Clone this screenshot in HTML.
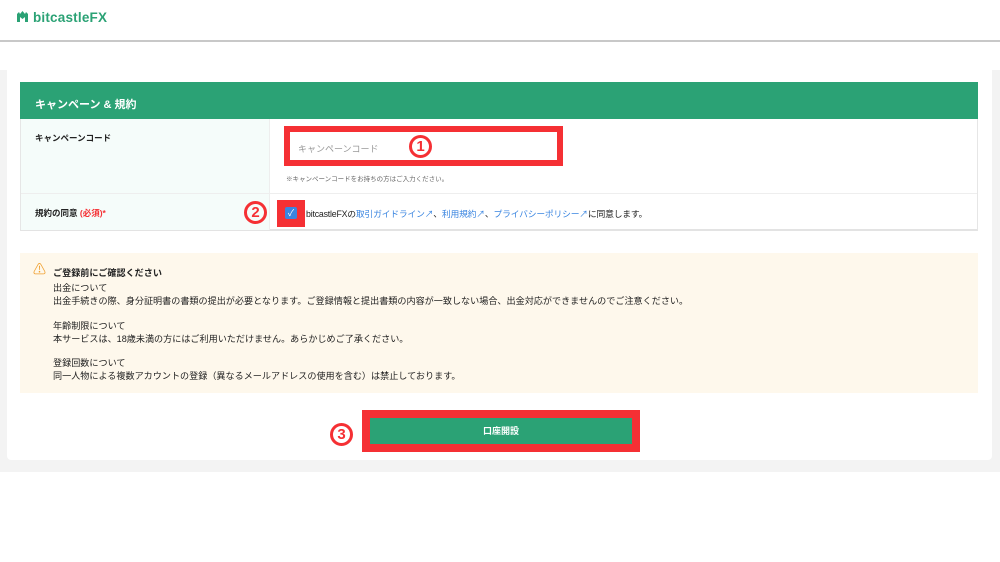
<!DOCTYPE html>
<html><head><meta charset="utf-8"><style>
*{box-sizing:border-box;margin:0;padding:0}
body{width:1000px;height:562px;background:#fff;font-family:"Liberation Sans","Noto Sans CJK JP",sans-serif;position:relative;overflow:hidden;color:#222}
.abs{position:absolute}
.hdr{left:0;top:0;width:1000px;height:42px;background:#fff;border-bottom:2px solid #c8c8c8}
.logo{left:16px;top:10px;font-size:13.5px;font-weight:bold;color:#2ba275;letter-spacing:0.2px}
.gray{left:0;top:70px;width:1000px;height:402px;background:#f3f3f3}
.card{left:7px;top:66px;width:985px;height:394px;background:#fff;border-radius:4px}
.tbl{left:20px;top:82px;width:958px;height:149px;border:1px solid #e6e6e6;border-bottom:2px solid #e3e3e3}
.th{left:20px;top:82px;width:958px;height:37px;background:#2ba275;color:#fff;font-size:11px;font-weight:bold;padding:14px 0 0 15px}
.lc{background:#f5fcfa;left:21px;width:249px;border-right:1px solid #eee}
.lbl{font-size:8.5px;font-weight:bold;color:#222}
.red{border:6px solid #f53034}
.circ{width:23px;height:23px;border:3px solid #f53034;border-radius:50%;color:#f53034;font-weight:bold;font-size:15px;line-height:17px;text-align:center;font-family:"Liberation Sans",sans-serif}
.warn{left:20px;top:253px;width:958px;height:140px;background:#fef8ec;font-size:9.1px;line-height:13px}
.blue{color:#3a85e0}
</style></head><body>
<div class="abs hdr"></div>
<div class="abs logo"><svg width="13" height="12" viewBox="0 0 13 12" style="vertical-align:-1px"><path d="M1 3 L3 1 L4 3 L6.5 0 L9 3 L10 1 L12 3 L12 11 L9 11 L9 6 L6.5 8 L4 6 L4 11 L1 11Z" fill="#2ba275"/></svg> bitcastleFX</div>
<div class="abs gray"></div>
<div class="abs card"></div>
<div class="abs tbl"></div>
<div class="abs th">キャンペーン &amp; 規約</div>
<div class="abs lc" style="top:119px;height:74px"></div>
<div class="abs lc" style="top:194px;height:36px"></div>
<div class="abs" style="left:21px;top:193px;width:956px;height:1px;background:#eee"></div>
<div class="abs lbl" style="left:35px;top:132px">キャンペーンコード</div>
<div class="abs lbl" style="left:35px;top:207px">規約の同意 <span style="color:#f53034">(必須)*</span></div>
<div class="abs red" style="left:284px;top:126px;width:279px;height:40px"></div>
<div class="abs" style="left:290px;top:132px;width:267px;height:28px;background:#fff;font-size:9px;color:#999;padding:10px 0 0 8px">キャンペーンコード</div>
<div class="abs circ" style="left:409px;top:135px">1</div>
<div class="abs" style="left:286px;top:173px;font-size:6.5px;color:#666">※キャンペーンコードをお持ちの方はご入力ください。</div>
<div class="abs circ" style="left:244px;top:201px">2</div>
<div class="abs" style="left:277px;top:200px;width:28px;height:27px;background:#f53034"></div>
<div class="abs" style="left:285px;top:207px;width:12px;height:12px;background:#3a85e0;border-radius:2px;color:#fff;font-size:9px;text-align:center;line-height:12px">✓</div>
<div class="abs" style="left:306px;top:207px;font-size:8.8px;letter-spacing:-0.2px">bitcastleFXの<span class="blue">取引ガイドライン↗</span>、<span class="blue">利用規約↗</span>、<span class="blue">プライバシーポリシー↗</span>に同意します。</div>
<div class="abs warn">
<div class="abs" style="left:13px;top:10px;color:#f0a030;font-size:13px">⚠</div>
<div class="abs" style="left:33px;top:14px;font-weight:bold">ご登録前にご確認ください</div>
<div class="abs" style="left:33px;top:29px">出金について<br>出金手続きの際、身分証明書の書類の提出が必要となります。ご登録情報と提出書類の内容が一致しない場合、出金対応ができませんのでご注意ください。</div>
<div class="abs" style="left:33px;top:67px">年齢制限について<br>本サービスは、18歳未満の方にはご利用いただけません。あらかじめご了承ください。</div>
<div class="abs" style="left:33px;top:104px">登録回数について<br>同一人物による複数アカウントの登録（異なるメールアドレスの使用を含む）は禁止しております。</div>
</div>
<div class="abs circ" style="left:330px;top:423px">3</div>
<div class="abs" style="left:362px;top:410px;width:278px;height:42px;background:#f53034"></div>
<div class="abs" style="left:370px;top:418px;width:262px;height:26px;background:#2ba275;color:#fff;font-size:9px;font-weight:bold;text-align:center;line-height:26px">口座開設</div>
</body></html>
